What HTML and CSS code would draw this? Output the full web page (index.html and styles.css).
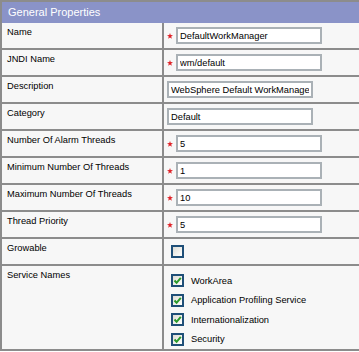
FILE: index.html
```html
<!DOCTYPE html>
<html>
<head>
<meta charset="utf-8">
<link rel="stylesheet" href="styles.css">
</head>
<body>
<div class="panel">
  <div class="head">General Properties</div>
  <div class="grid">
    <div class="lbl">Name</div>
    <div class="val"><svg class="req" viewBox="0 0 10 10"><polygon points="5,0 6.2,3.4 10,3.6 7,5.9 8.1,9.6 5,7.4 1.9,9.6 3,5.9 0,3.6 3.8,3.4"/></svg><input class="txt" type="text" value="DefaultWorkManager"></div>

    <div class="lbl">JNDI Name</div>
    <div class="val"><svg class="req" viewBox="0 0 10 10"><polygon points="5,0 6.2,3.4 10,3.6 7,5.9 8.1,9.6 5,7.4 1.9,9.6 3,5.9 0,3.6 3.8,3.4"/></svg><input class="txt" type="text" value="wm/default"></div>

    <div class="lbl">Description</div>
    <div class="val"><input class="txt" type="text" value="WebSphere Default WorkManager"></div>

    <div class="lbl">Category</div>
    <div class="val"><input class="txt" type="text" value="Default"></div>

    <div class="lbl">Number Of Alarm Threads</div>
    <div class="val"><svg class="req" viewBox="0 0 10 10"><polygon points="5,0 6.2,3.4 10,3.6 7,5.9 8.1,9.6 5,7.4 1.9,9.6 3,5.9 0,3.6 3.8,3.4"/></svg><input class="txt" type="text" value="5"></div>

    <div class="lbl">Minimum Number Of Threads</div>
    <div class="val"><svg class="req" viewBox="0 0 10 10"><polygon points="5,0 6.2,3.4 10,3.6 7,5.9 8.1,9.6 5,7.4 1.9,9.6 3,5.9 0,3.6 3.8,3.4"/></svg><input class="txt" type="text" value="1"></div>

    <div class="lbl">Maximum Number Of Threads</div>
    <div class="val"><svg class="req" viewBox="0 0 10 10"><polygon points="5,0 6.2,3.4 10,3.6 7,5.9 8.1,9.6 5,7.4 1.9,9.6 3,5.9 0,3.6 3.8,3.4"/></svg><input class="txt" type="text" value="10"></div>

    <div class="lbl">Thread Priority</div>
    <div class="val"><svg class="req" viewBox="0 0 10 10"><polygon points="5,0 6.2,3.4 10,3.6 7,5.9 8.1,9.6 5,7.4 1.9,9.6 3,5.9 0,3.6 3.8,3.4"/></svg><input class="txt" type="text" value="5"></div>

    <div class="lbl">Growable</div>
    <div class="val"><span class="cb"></span></div>

    <div class="lbl">Service Names</div>
    <div class="val list">
      <div class="item"><span class="cb"><svg viewBox="0 0 9 9"><path d="M1.5 4.5 L3.6 6.8 L7.8 1.8" /></svg></span><span>WorkArea</span></div>
      <div class="item"><span class="cb"><svg viewBox="0 0 9 9"><path d="M1.5 4.5 L3.6 6.8 L7.8 1.8" /></svg></span><span>Application Profiling Service</span></div>
      <div class="item"><span class="cb"><svg viewBox="0 0 9 9"><path d="M1.5 4.5 L3.6 6.8 L7.8 1.8" /></svg></span><span>Internationalization</span></div>
      <div class="item"><span class="cb"><svg viewBox="0 0 9 9"><path d="M1.5 4.5 L3.6 6.8 L7.8 1.8" /></svg></span><span>Security</span></div>
    </div>
  </div>
</div>
</body>
</html>
```

FILE: styles.css
```css
html, body {
  margin: 0;
  padding: 0;
  background: #ffffff;
  overflow: hidden;
}
body {
  font-family: "Liberation Sans", Arial, sans-serif;
  font-size: 9.3px;
  color: #000;
}
.panel {
  width: 361px;
  border-top: 2px solid #8c8c8c;
  border-left: 2px solid #8c8c8c;
}
.head {
  height: 21px;
  line-height: 21px;
  background: #8a93c8;
  color: #fff;
  font-size: 11px;
  padding-left: 6px;
}
.grid {
  display: grid;
  grid-template-columns: 162px 1fr;
}
.lbl {
  box-sizing: border-box;
  height: 27px;
  background: #f7f7f7;
  border-right: 2px solid #8c8c8c;
  border-bottom: 2px solid #8c8c8c;
  padding: 3px 0 0 5px;
  line-height: 12px;
}
.val {
  box-sizing: border-box;
  height: 27px;
  background: #f7f7f7;
  border-bottom: 2px solid #8c8c8c;
  padding-left: 3px;
  display: flex;
  align-items: center;
}
.req {
  width: 6px;
  height: 6px;
  fill: #e0242a;
  margin-right: 3px;
  flex: none;
}
.txt {
  box-sizing: border-box;
  width: 146px;
  height: 17px;
  margin: 0;
  padding: 0 2px;
  border: 2px solid #aab1b6;
  background: #fff;
  font-family: "Liberation Sans", Arial, sans-serif;
  font-size: 9.3px;
  color: #000;
  outline: none;
}
.cb {
  box-sizing: border-box;
  width: 13px;
  height: 13px;
  border: 2px solid #1f4f78;
  background: linear-gradient(135deg, #dcdcd6 0%, #f2f2ee 60%, #ffffff 100%);
  margin-left: 4px;
  display: inline-flex;
  flex: none;
}
.cb svg {
  width: 9px;
  height: 9px;
  fill: none;
  stroke: #2a9a2a;
  stroke-width: 2;
}
.grid .lbl:nth-last-child(2),
.grid .list {
  height: 85px;
}
.list {
  flex-direction: column;
  align-items: flex-start;
  padding-top: 8px;
  gap: 6.6px;
  justify-content: flex-start;
}
.item {
  display: flex;
  align-items: center;
  height: 13px;
}
.item span:last-child {
  margin-left: 7px;
}
```
